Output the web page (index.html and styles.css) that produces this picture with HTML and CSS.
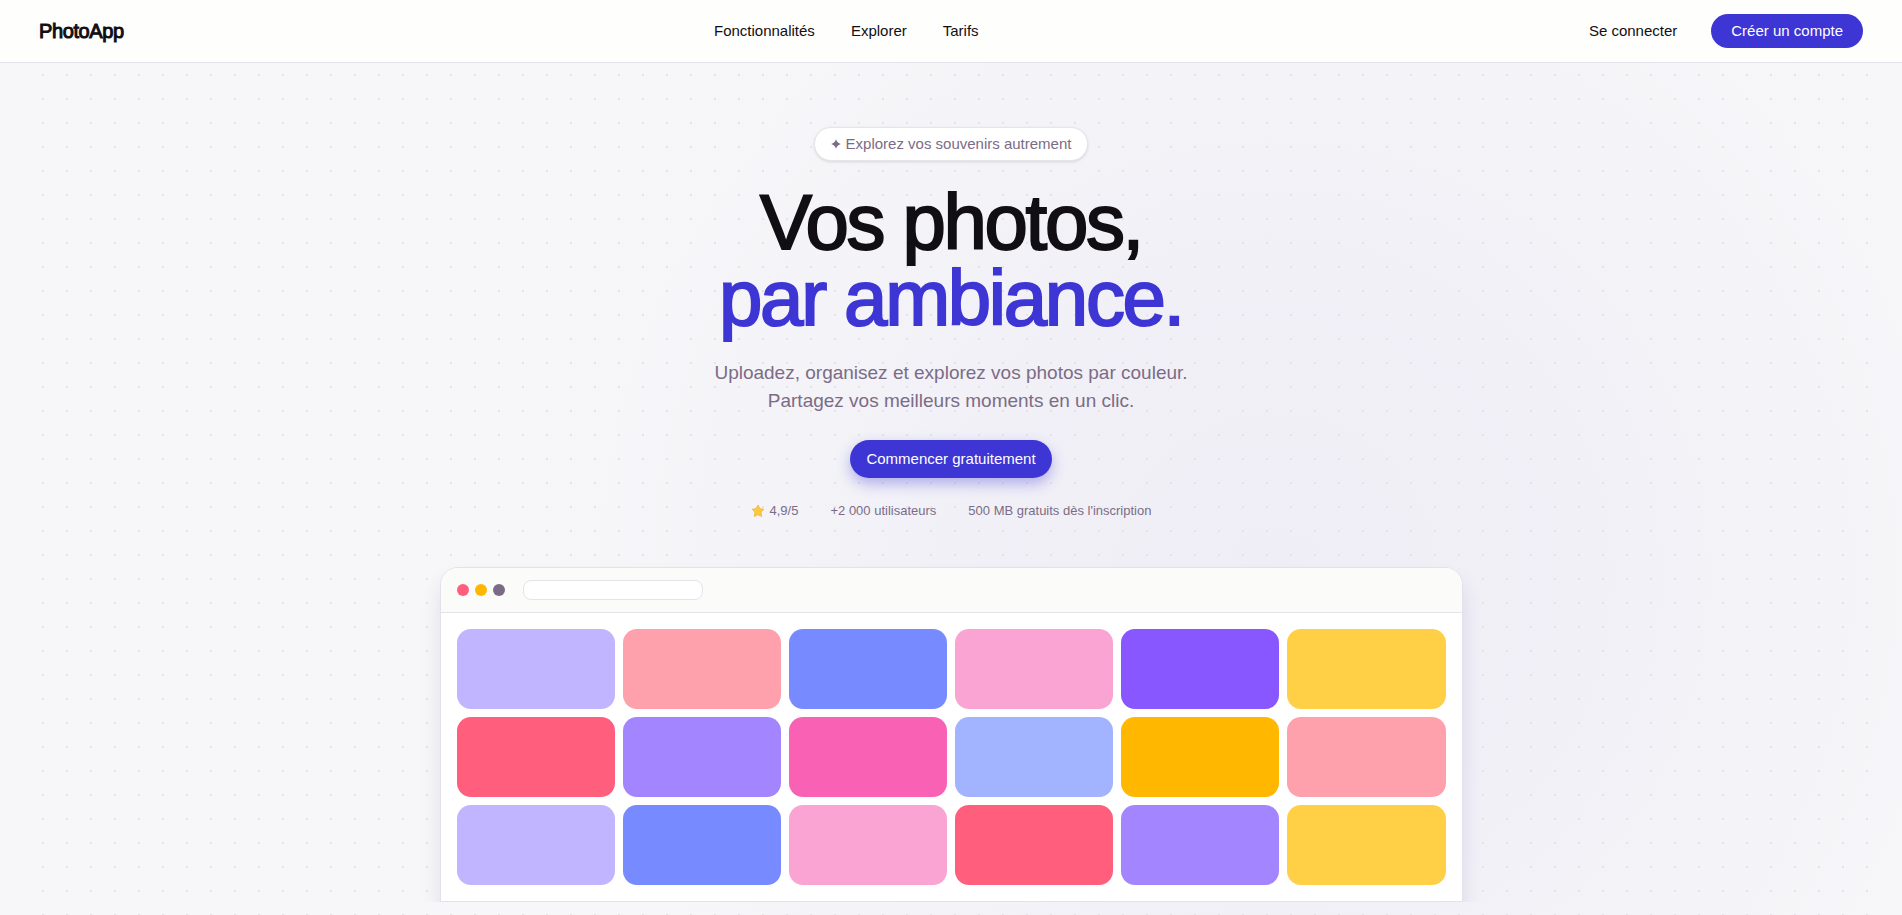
FILE: index.html
```html
<!DOCTYPE html>
<html lang="fr">

<head>
    <meta charset="UTF-8">
    <meta name="viewport" content="width=device-width, initial-scale=1.0">
    <title>PhotoApp</title>
    <link rel="stylesheet" href="styles.css">
</head>

<body>
    <header class="header">
        <a href="#" class="logo">PhotoApp</a>
        <nav class="nav">
            <a href="#fonctionnalites">Fonctionnalités</a>
            <a href="#explorer">Explorer</a>
            <a href="#tarifs">Tarifs</a>
        </nav>
        <div class="actions">
            <a href="#connexion" class="login-link">Se connecter</a>
            <button class="btn btn-signup">Créer un compte</button>
        </div>
    </header>

    <main class="hero">
        <p class="badge">
            <svg class="spark" viewBox="0 0 10 10" aria-hidden="true">
                <path d="M5 0.2 Q6.1 3.9 9.8 5 Q6.1 6.1 5 9.8 Q3.9 6.1 0.2 5 Q3.9 3.9 5 0.2 Z" />
            </svg>
            Explorez vos souvenirs autrement
        </p>
        <h1 class="title">Vos photos,<br><span class="accent">par ambiance.</span></h1>
        <p class="subtitle">Uploadez, organisez et explorez vos photos par couleur.<br>Partagez vos meilleurs moments en un clic.</p>
        <button class="btn btn-start">Commencer gratuitement</button>
        <ul class="stats">
            <li>
                <svg class="star" viewBox="0 0 14 14" aria-hidden="true">
                    <path d="M7 1 L8.9 4.7 L12.9 5.3 L10 8.1 L10.7 12.4 L7 10.6 L3.3 12.4 L4 8.1 L1.1 5.3 L5.1 4.7 Z" />
                </svg>
                4,9/5
            </li>
            <li>+2 000 utilisateurs</li>
            <li>500 MB gratuits dès l'inscription</li>
        </ul>

        <!-- Aperçu de l'application -->
        <div class="preview-wrap">
            <div class="preview">
                <div class="preview-bar">
                    <span class="dot rose"></span>
                    <span class="dot amber"></span>
                    <span class="dot grey"></span>
                    <span class="address"></span>
                </div>
                <div class="preview-grid">
                    <div class="tile violet-light"></div>
                    <div class="tile rose-light"></div>
                    <div class="tile indigo"></div>
                    <div class="tile pink-light"></div>
                    <div class="tile violet-dark"></div>
                    <div class="tile yellow"></div>
                    <div class="tile rose"></div>
                    <div class="tile violet"></div>
                    <div class="tile pink"></div>
                    <div class="tile indigo-light"></div>
                    <div class="tile amber"></div>
                    <div class="tile rose-light"></div>
                    <div class="tile violet-light"></div>
                    <div class="tile indigo"></div>
                    <div class="tile pink-light"></div>
                    <div class="tile rose"></div>
                    <div class="tile violet"></div>
                    <div class="tile yellow"></div>
                </div>
            </div>
        </div>
    </main>
</body>

</html>
```

FILE: styles.css
```css
* {
    box-sizing: border-box;
}

body {
    margin: 0;
    min-height: 100vh;
    display: flex;
    flex-direction: column;
    font-family: "Liberation Sans", Arial, sans-serif;
    font-size: 15px;
    line-height: 18px;
    color: #110e14;
    background-color: #f7f7f9;
}

a {
    color: inherit;
    text-decoration: none;
}

.header {
    display: flex;
    justify-content: space-between;
    align-items: center;
    padding: 14px 39px;
    background-color: #fefefd;
    border-bottom: 1px solid #e4e4ea;
}

.logo {
    font-size: 20px;
    letter-spacing: -0.02em;
    -webkit-text-stroke: 1px #110e14;
}

.nav {
    display: flex;
    gap: 36px;
}

.actions {
    display: flex;
    align-items: center;
    gap: 14px;
}

.login-link {
    padding: 8px 20px;
}

.btn {
    font-family: inherit;
    font-size: 15px;
    line-height: 18px;
    color: #fff;
    background-color: #3d35d4;
    border: none;
    border-radius: 20px;
    cursor: pointer;
}

.btn:hover {
    background-color: #322bb8;
}

.btn-signup {
    padding: 8px 20px;
}

.hero {
    position: relative;
    flex: 1;
    display: flex;
    flex-direction: column;
    align-items: center;
    padding: 64px 39px 0;
    text-align: center;
    background: radial-gradient(circle at 67% 60%, #efeef6 0%, #f1f0f7 22%, #f3f3f8 36%, #f6f6f9 48%, #f7f7f9 62%);
}

/* Trame de points derrière le contenu */
.hero::before {
    content: "";
    position: absolute;
    inset: 0 31px;
    background-image: radial-gradient(circle, #e4e4e7 1px, transparent 1px);
    background-size: 24px 24px;
}

.hero > * {
    position: relative;
}

.badge {
    display: flex;
    align-items: center;
    gap: 5px;
    margin: 0 0 23px;
    padding: 7px 16px;
    color: #7b6c86;
    background-color: #fff;
    border: 1px solid #e6e5ea;
    border-radius: 18px;
    box-shadow: 0 1px 3px rgba(0, 0, 0, 0.12);
}

.spark {
    width: 10px;
    height: 10px;
    fill: #7b6c86;
}

.title {
    margin: 0 0 23px;
    font-size: 78px;
    font-weight: 400;
    line-height: 76px;
    letter-spacing: -0.03em;
    -webkit-text-stroke: 2px currentColor;
}

.accent {
    color: #3d35d4;
}

.subtitle {
    margin: 0 0 25px;
    font-size: 19px;
    line-height: 28px;
    color: #7b6c86;
}

.btn-start {
    padding: 10px 16px;
    box-shadow: 0 6px 14px rgba(61, 53, 212, 0.35);
}

.stats {
    display: flex;
    gap: 32px;
    margin: 25px 0 49px;
    padding: 0;
    list-style: none;
    font-size: 13px;
    line-height: 15px;
    color: #7b6c86;
}

.stats li {
    display: flex;
    align-items: center;
    gap: 5px;
}

.star {
    width: 14px;
    height: 14px;
    fill: #fdc83a;
    stroke: #f5ba45;
    stroke-width: 1;
    stroke-linejoin: round;
}

/* Coupe l'ombre au bas de la fenêtre */
.preview-wrap {
    display: flex;
    justify-content: center;
    width: 100%;
    padding: 30px 0 0;
    margin-top: -30px;
    overflow: hidden;
}

.preview {
    width: 100%;
    max-width: 1023px;
    background-color: #fff;
    border: 1px solid #e3e2e8;
    border-radius: 18px 18px 0 0;
    box-shadow: 0 14px 20px rgba(61, 53, 120, 0.12);
    overflow: hidden;
}

.preview-bar {
    display: flex;
    align-items: center;
    gap: 6px;
    padding: 12px 16px;
    background-color: #fbfbfa;
    border-bottom: 1px solid #e4e4e8;
}

.dot {
    width: 12px;
    height: 12px;
    border-radius: 50%;
}

.address {
    width: 180px;
    height: 20px;
    margin-left: 12px;
    background-color: #fff;
    border: 1px solid #e5e4ec;
    border-radius: 8px;
}

.preview-grid {
    display: grid;
    grid-template-columns: repeat(6, 1fr);
    gap: 8px;
    padding: 16px;
}

.tile {
    height: 80px;
    border-radius: 14px;
}

.grey {
    background-color: #7b6c86;
}

.rose {
    background-color: #ff5f7d;
}

.rose-light {
    background-color: #ffa1ad;
}

.amber {
    background-color: #ffb700;
}

.yellow {
    background-color: #ffd045;
}

.violet-light {
    background-color: #c1b5ff;
}

.violet {
    background-color: #a385ff;
}

.violet-dark {
    background-color: #8857ff;
}

.indigo {
    background-color: #788aff;
}

.indigo-light {
    background-color: #a2b3ff;
}

.pink {
    background-color: #f861b4;
}

.pink-light {
    background-color: #faa4d4;
}
```
